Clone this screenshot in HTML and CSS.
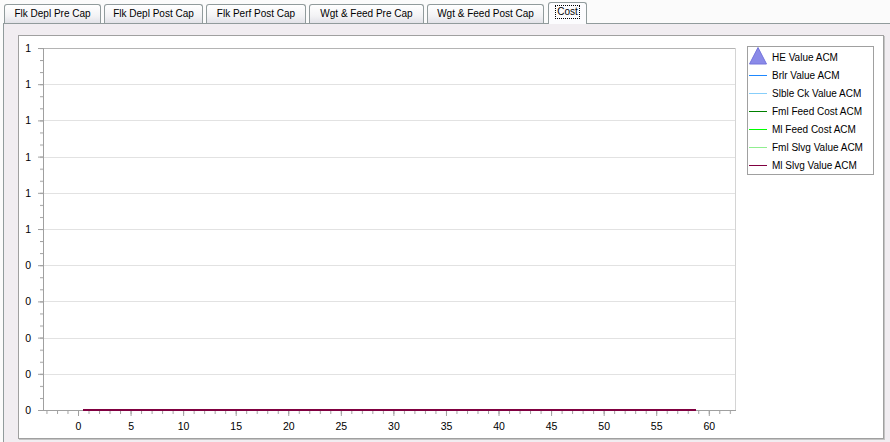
FILE: index.html
```html
<!DOCTYPE html>
<html lang="en">
  <head>
    <meta charset="UTF-8" />
    <meta name="viewport" content="width=device-width, initial-scale=1.0" />
    <title>Cost</title>
    <link rel="stylesheet" href="styles.css">
  </head>

  <body>
    <div class="tabs">
      <div class="tab t1">Flk Depl Pre Cap</div>
      <div class="tab t2">Flk Depl Post Cap</div>
      <div class="tab t3">Flk Perf Post Cap</div>
      <div class="tab t4">Wgt &amp; Feed Pre Cap</div>
      <div class="tab t5">Wgt &amp; Feed Post Cap</div>
      <div class="tab active"><span class="focus">Cost</span></div>
    </div>

    <div class="panel">
      <div class="chart">
        <svg class="plot" width="727" height="402" viewBox="0 0 727 402">
          <defs>
            <pattern id="xminor" x="59" y="375" width="10.513" height="10" patternUnits="userSpaceOnUse">
              <rect width="1" height="3" fill="#a0a0a0" />
            </pattern>
            <pattern id="xmajor" x="59" y="375" width="52.565" height="10" patternUnits="userSpaceOnUse">
              <rect width="1" height="5" fill="#a0a0a0" />
            </pattern>
            <pattern id="yminor" x="21" y="12" width="10" height="12.0667" patternUnits="userSpaceOnUse">
              <rect width="3" height="1" fill="#a0a0a0" />
            </pattern>
            <pattern id="ymajor" x="19" y="12" width="10" height="36.2" patternUnits="userSpaceOnUse">
              <rect width="5" height="1" fill="#a0a0a0" />
            </pattern>
          </defs>

          <!-- grid -->
          <path d="M24 48.5H717M24 84.5H717M24 121.5H717M24 157.5H717M24 193.5H717M24 229.5H717M24 265.5H717M24 302.5H717M24 338.5H717" stroke="#e2e2e2" fill="none" />
          <path d="M24 12.5H717" stroke="#b4b4b4" fill="none" />
          <path d="M716.5 12V374" stroke="#d4d4d4" fill="none" />

          <!-- ticks -->
          <rect x="24" y="375" width="693" height="3" fill="url(#xminor)" />
          <rect x="24" y="375" width="693" height="5" fill="url(#xmajor)" />
          <rect x="21" y="12" width="3" height="363" fill="url(#yminor)" />
          <rect x="19" y="12" width="5" height="363" fill="url(#ymajor)" />

          <!-- axes -->
          <path d="M24.5 12V375M24 374.5H717" stroke="#a0a0a0" fill="none" />

          <!-- series -->
          <path d="M64 374H677" stroke="#800040" stroke-width="2" fill="none" />

          <g class="ylabels" text-anchor="end">
            <text x="12" y="16">1</text>
            <text x="12" y="52.2">1</text>
            <text x="12" y="88.4">1</text>
            <text x="12" y="124.6">1</text>
            <text x="12" y="160.8">1</text>
            <text x="12" y="197">1</text>
            <text x="12" y="233.2">0</text>
            <text x="12" y="269.4">0</text>
            <text x="12" y="305.6">0</text>
            <text x="12" y="341.8">0</text>
            <text x="12" y="378">0</text>
          </g>

          <g class="xlabels" text-anchor="middle">
            <text x="59.5" y="394">0</text>
            <text x="112.1" y="394">5</text>
            <text x="164.6" y="394">10</text>
            <text x="217.2" y="394">15</text>
            <text x="269.8" y="394">20</text>
            <text x="322.3" y="394">25</text>
            <text x="374.9" y="394">30</text>
            <text x="427.5" y="394">35</text>
            <text x="480" y="394">40</text>
            <text x="532.6" y="394">45</text>
            <text x="585.2" y="394">50</text>
            <text x="637.7" y="394">55</text>
            <text x="690.3" y="394">60</text>
          </g>
        </svg>

        <div class="legend">
          <div class="item">
            <svg class="marker" width="18" height="18" viewBox="0 0 18 18">
              <polygon points="9,0.5 17.5,17 0.5,17" fill="#8a8ae8" stroke="#7474dc" />
            </svg>
            HE Value ACM
          </div>
          <div class="item"><span class="swatch brlr"></span>Brlr Value ACM</div>
          <div class="item"><span class="swatch slble"></span>Slble Ck Value ACM</div>
          <div class="item"><span class="swatch fml-feed"></span>Fml Feed Cost ACM</div>
          <div class="item"><span class="swatch ml-feed"></span>Ml Feed Cost ACM</div>
          <div class="item"><span class="swatch fml-slvg"></span>Fml Slvg Value ACM</div>
          <div class="item"><span class="swatch ml-slvg"></span>Ml Slvg Value ACM</div>
        </div>
      </div>
    </div>
  </body>
</html>
```

FILE: styles.css
```css
body {
  margin: 0;
  height: 442px;
  overflow: hidden;
  background-color: #fbfbfb;
  font-family: "Liberation Sans", Arial, sans-serif;
  font-size: 10px;
  color: #000;
}

.tabs {
  display: flex;
  align-items: flex-end;
  gap: 2px;
  height: 23px;
  padding-left: 4px;
}

.tab {
  box-sizing: border-box;
  height: 19px;
  line-height: 18px;
  border: 1px solid #919b9c;
  border-bottom: none;
  border-radius: 3px 3px 0 0;
  background: linear-gradient(#ffffff, #f3f3f5 60%, #e2e2e8);
  text-align: center;
  white-space: nowrap;
}

.t1 { width: 97px; }
.t2 { width: 99px; margin-left: 1px; }
.t3 { width: 100px; margin-left: 1px; }
.t4 { width: 115px; margin-left: 1px; }
.t5 { width: 117px; margin-left: 1px; }

.tab.active {
  position: relative;
  z-index: 1;
  width: 39px;
  height: 22px;
  margin: 0 0 -1px 2px;
  background: #fcfcfe;
}

.focus {
  display: inline-block;
  line-height: 12px;
  padding: 0 1px;
  margin-top: 3px;
  outline: 1px dotted #000;
}

.panel {
  height: 407px;
  margin-left: 3px;
  padding: 11px 5px 0 14px;
  border-top: 1px solid #919b9c;
  border-left: 1px solid #919b9c;
  background-color: #f1edf1;
}

.chart {
  display: flex;
  align-items: flex-start;
  width: 864px;
  height: 402px;
  border: 1px solid #a0a0a0;
  box-shadow: 1px 1px 0 #c4c4c4;
  background-color: #fff;
}

.plot {
  display: block;
  flex: none;
}

.plot text {
  font-family: "Liberation Sans", Arial, sans-serif;
  font-size: 10.5px;
  fill: #000;
}

.legend {
  width: 125px;
  margin: 10px 0 0 1px;
  padding-top: 1px;
  border: 1px solid #a0a0a0;
}

.item {
  display: flex;
  align-items: center;
  height: 18px;
  white-space: nowrap;
}

.marker {
  flex: none;
  margin: -2px 5px 0 1px;
}

.swatch {
  flex: none;
  align-self: flex-start;
  width: 18px;
  height: 1px;
  margin: 9px 5px 0 1px;
}

.brlr { background-color: #1e88ff; }
.slble { background-color: #87cefa; }
.fml-feed { background-color: #008000; }
.ml-feed { background-color: #00ff00; }
.fml-slvg { background-color: #90ee90; }
.ml-slvg { background-color: #800040; }
```
